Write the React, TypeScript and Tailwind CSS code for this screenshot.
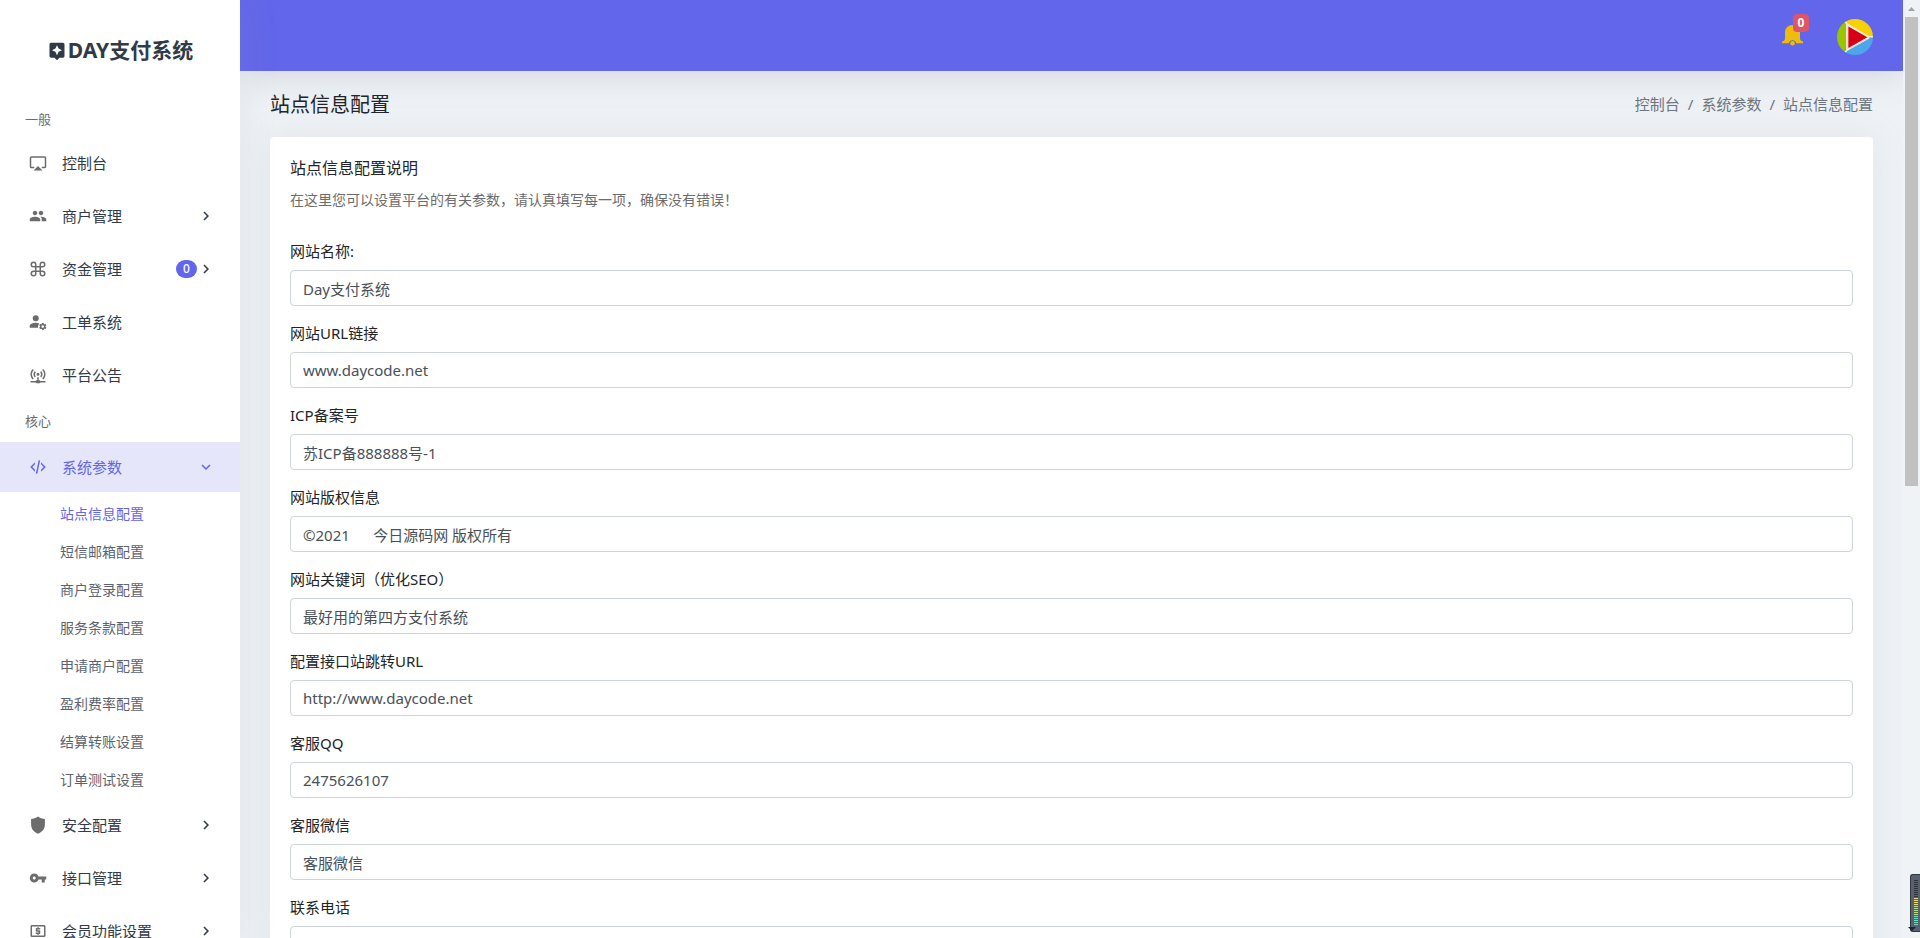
import type { ReactNode } from "react";
import {
  MdAssistant,
  MdChevronRight,
  MdExpandMore,
  MdLocalAtm,
  MdPeople,
  MdVpnKey,
} from "react-icons/md";

function Glyph({ d, children }: { d?: string; children?: ReactNode }) {
  return (
    <svg viewBox="0 0 24 24" className="size-[18px]" fill="currentColor" aria-hidden="true">
      {d ? <path d={d} /> : children}
    </svg>
  );
}

const AIRPLAY =
  "M6,22H18L12,16M21,3H3A2,2 0 0,0 1,5V17A2,2 0 0,0 3,19H7V17H3V5H21V17H17V19H21A2,2 0 0,0 23,17V5A2,2 0 0,0 21,3Z";
const COMMAND =
  "M6,2A4,4 0 0,1 10,6V8H14V6A4,4 0 0,1 18,2A4,4 0 0,1 22,6A4,4 0 0,1 18,10H16V14H18A4,4 0 0,1 22,18A4,4 0 0,1 18,22A4,4 0 0,1 14,18V16H10V18A4,4 0 0,1 6,22A4,4 0 0,1 2,18A4,4 0 0,1 6,14H8V10H6A4,4 0 0,1 2,6A4,4 0 0,1 6,2M16,18A2,2 0 0,0 18,20A2,2 0 0,0 20,18A2,2 0 0,0 18,16H16V18M14,10H10V14H14V10M6,16A2,2 0 0,0 4,18A2,2 0 0,0 6,20A2,2 0 0,0 8,18V16H6M8,6A2,2 0 0,0 6,4A2,2 0 0,0 4,6A2,2 0 0,0 6,8H8V6M18,8A2,2 0 0,0 20,6A2,2 0 0,0 18,4A2,2 0 0,0 16,6V8H18Z";
const NETWORK =
  "M4.93,3.93C3.12,5.74 2,8.24 2,11C2,13.76 3.12,16.26 4.93,18.07L6.34,16.66C4.89,15.22 4,13.22 4,11C4,8.79 4.89,6.78 6.34,5.34L4.93,3.93M19.07,3.93L17.66,5.34C19.11,6.78 20,8.79 20,11C20,13.22 19.11,15.22 17.66,16.66L19.07,18.07C20.88,16.26 22,13.76 22,11C22,8.24 20.88,5.74 19.07,3.93M7.76,6.76C6.67,7.85 6,9.35 6,11C6,12.65 6.67,14.15 7.76,15.24L9.17,13.83C8.45,13.11 8,12.11 8,11C8,9.89 8.45,8.89 9.17,8.17L7.76,6.76M16.24,6.76L14.83,8.17C15.55,8.89 16,9.89 16,11C16,12.11 15.55,13.11 14.83,13.83L16.24,15.24C17.33,14.15 18,12.65 18,11C18,9.35 17.33,7.85 16.24,6.76M12,9A2,2 0 0,0 10,11A2,2 0 0,0 12,13A2,2 0 0,0 14,11A2,2 0 0,0 12,9M11,15V19H10A1,1 0 0,0 9,20H2V22H9A1,1 0 0,0 10,23H14A1,1 0 0,0 15,22H22V20H15A1,1 0 0,0 14,19H13V15H11Z";
const CODE =
  "M12.89,3L14.85,3.4L11.11,21L9.15,20.6L12.89,3M19.59,12L16,8.41V5.58L22.42,12L16,18.41V15.58L19.59,12M1.58,12L8,5.58V8.41L4.41,12L8,15.58V18.41L1.58,12Z";
const SHIELD =
  "M12 .8C9.4 2.6 5.8 3.8 2.8 4v7c0 5.800 3.100 10.200 9.200 12.500 6.100-2.300 9.200-6.700 9.200-12.500V4C18.200 3.800 14.600 2.600 12 .8Z";
const GEAR =
  "M19.14 12.94c.04-.3.06-.61.06-.94 0-.32-.02-.64-.07-.94l2.03-1.58a.49.49 0 0 0 .12-.61l-1.92-3.32a.488.488 0 0 0-.59-.22l-2.39.96c-.5-.38-1.03-.7-1.62-.94l-.36-2.54a.484.484 0 0 0-.48-.41h-3.84c-.24 0-.43.17-.47.41l-.36 2.54c-.59.24-1.13.57-1.62.94l-2.39-.96c-.22-.08-.47 0-.59.22L2.74 8.87c-.12.21-.08.47.12.61l2.03 1.58c-.05.3-.09.63-.09.94s.02.64.07.94l-2.03 1.58a.49.49 0 0 0-.12.61l1.92 3.32c.12.22.37.29.59.22l2.39-.96c.5.38 1.03.7 1.62.94l.36 2.54c.05.24.24.41.48.41h3.84c.24 0 .44-.17.47-.41l.36-2.54c.59-.24 1.13-.56 1.62-.94l2.39.96c.22.08.47 0 .59-.22l1.92-3.32c.12-.22.07-.47-.12-.61l-2.01-1.58zM12 15.6c-1.98 0-3.6-1.62-3.6-3.6s1.62-3.6 3.6-3.6 3.6 1.62 3.6 3.6-1.62 3.6-3.6 3.6z";

const submenu = [
  "站点信息配置",
  "短信邮箱配置",
  "商户登录配置",
  "服务条款配置",
  "申请商户配置",
  "盈利费率配置",
  "结算转账设置",
  "订单测试设置",
];

const fields = [
  { id: "site-name", label: "网站名称:", value: "Day支付系统" },
  { id: "site-url", label: "网站URL链接", value: "www.daycode.net" },
  { id: "icp", label: "ICP备案号", value: "苏ICP备888888号-1" },
  { id: "copyright", label: "网站版权信息", value: "©2021\u00a0\u00a0\u00a0\u00a0\u00a0 今日源码网 版权所有" },
  { id: "keywords", label: "网站关键词（优化SEO）", value: "最好用的第四方支付系统" },
  { id: "redirect", label: "配置接口站跳转URL", value: "http://www.daycode.net" },
  { id: "qq", label: "客服QQ", value: "2475626107" },
  { id: "wechat", label: "客服微信", value: "客服微信" },
  { id: "phone", label: "联系电话", value: "" },
];

type ItemProps = {
  icon: ReactNode;
  label: string;
  arrow?: boolean;
  badge?: string;
  open?: boolean;
};

function NavItem({ icon, label, arrow, badge, open }: ItemProps) {
  return (
    <a
      href="#"
      aria-expanded={arrow ? Boolean(open) : undefined}
      className={
        open
          ? "flex h-[50px] shrink-0 items-center bg-[#e6e6fb] pr-[25px] pl-[29px] text-[15px] text-[#6266ea]"
          : "flex h-[50px] shrink-0 items-center pr-[25px] pl-[29px] text-[15px] text-[#313a46]"
      }
    >
      <span className={open ? "text-[#6266ea]" : "text-[#6c6c6c]"}>{icon}</span>
      <span className="ml-[15px] flex-1">{label}</span>
      {badge && (
        <span className="flex h-[18px] w-[21px] items-center justify-center rounded-full bg-[#6266ea] text-xs font-medium text-white">
          {badge}
        </span>
      )}
      {arrow && (open ? <MdExpandMore className="size-[18px]" /> : <MdChevronRight className="size-[18px]" />)}
    </a>
  );
}

function Sidebar() {
  return (
    <aside className="z-20 flex w-60 shrink-0 flex-col overflow-hidden bg-white shadow-[0_0_35px_0_rgba(154,161,171,0.15)]">
      <a href="#" className="flex h-[100px] shrink-0 items-center justify-center gap-px pt-[2px] text-[21px] font-bold text-[#313a46]">
        <MdAssistant className="size-5" />
        <span>DAY支付系统</span>
      </a>
      <nav className="flex flex-col">
        <h2 className="px-[25px] pt-[9px] pb-[9px] text-[13px] leading-5 text-[#6c6c6c]">一般</h2>
        <div className="flex flex-col gap-[3px]">
          <NavItem icon={<Glyph d={AIRPLAY} />} label="控制台" />
          <NavItem icon={<MdPeople className="size-[18px]" />} label="商户管理" arrow />
          <NavItem icon={<Glyph d={COMMAND} />} label="资金管理" arrow badge="0" />
          <NavItem
            icon={
              <Glyph>
                <circle cx="9" cy="7" r="4" />
                <path d="M9 13C6.300 13 1 14.300 1 17V19.500H12C12 17.300 12.500 15.500 13.600 14 12 13.300 10.200 13 9 13Z" />
                <path d={GEAR} transform="translate(12.400 12) scale(.5)" />
              </Glyph>
            }
            label="工单系统"
          />
          <NavItem icon={<Glyph d={NETWORK} />} label="平台公告" />
        </div>
        <h2 className="px-[25px] pt-[11px] pb-[11px] text-[13px] leading-5 text-[#6c6c6c]">核心</h2>
        <NavItem icon={<Glyph d={CODE} />} label="系统参数" arrow open />
        <ul className="flex flex-col pt-[3px] pb-px pl-[60px] text-sm">
          {submenu.map((name, i) => (
            <li key={name} className="flex h-[38px] items-center">
              <a href="#" className={i === 0 ? "text-[#6266ea]" : "text-[#5c6370]"}>
                {name}
              </a>
            </li>
          ))}
        </ul>
        <div className="flex flex-col gap-[3px]">
          <NavItem icon={<Glyph d={SHIELD} />} label="安全配置" arrow />
          <NavItem icon={<MdVpnKey className="size-[18px]" />} label="接口管理" arrow />
          <NavItem icon={<MdLocalAtm className="size-[18px]" />} label="会员功能设置" arrow />
        </div>
      </nav>
    </aside>
  );
}

function Header() {
  return (
    <header className="z-10 flex h-[71px] shrink-0 items-center justify-end gap-[33px] bg-[#6266ea] pr-[30px] shadow-[0_0_35px_0_rgba(120,128,140,0.3)]">
      <button type="button" aria-label="通知" className="relative h-6 w-[23px]">
        <svg viewBox="0 0 23 24" className="h-6 w-[23px]" fill="#edbd0a" aria-hidden="true">
          <path d="M11.500 1C15.800 1 19 4.200 19 8.500V14.500C19 16 20 17.200 22 17.400V19.300H15.200A3.800 3.800 0 0 0 7.800 19.300H1V17.400C3 17.200 4 16 4 14.500V8.500C4 4.200 7.200 1 11.500 1Z" />
          <circle cx="11.500" cy="19.300" r="2.300" />
        </svg>
        <span className="absolute -top-[10px] left-[12px] flex h-[18px] w-4 items-center justify-center rounded bg-[#dd5568] text-xs font-bold text-white">
          0
        </span>
      </button>
      <button type="button" aria-label="账户" className="mt-[3px]">
        <svg viewBox="0 0 36 36" className="size-9" aria-hidden="true">
          <defs>
            <clipPath id="avatar">
              <circle cx="18" cy="18" r="18" />
            </clipPath>
          </defs>
          <g clipPath="url(#avatar)">
            <path d="M9.500 0H0V36H9.500Z" fill="#98c404" />
            <path d="M8 0H36V18H9.500V3Z" fill="#f8d100" />
            <path d="M9.500 18H36V36H8V33Z" fill="#4da6ec" />
            <path d="M9.800 4V32M8 2.500 10 5 32 17.800H36M8 33.500 10 31 32 18.800" stroke="#f3ecd0" strokeWidth="1.500" fill="none" />
            <path d="M10.800 6.500 31.500 18.300 10.800 30Z" fill="#d80018" stroke="#f6efe0" strokeWidth="1.100" strokeLinejoin="round" />
          </g>
        </svg>
      </button>
    </header>
  );
}

function ScrollTrack() {
  return (
    <div aria-hidden="true" className="z-30 flex w-[17px] shrink-0 flex-col items-center bg-[#f0f3f6]">
      <svg viewBox="0 0 17 17" className="size-[17px] shrink-0" fill="#a3a3a3">
        <path d="M5 11 8.500 7 12 11Z" />
      </svg>
      <div className="h-1/2 w-[13px] bg-[#c1c1c1]" />
    </div>
  );
}

function LevelMeter() {
  return (
    <div
      aria-hidden="true"
      className="absolute right-0 bottom-[6px] z-40 flex h-[58px] w-[10px] items-center justify-end rounded-l-[3px] border border-r-0 border-[#33363f] bg-[#596070] pr-[2px]"
    >
      <svg viewBox="0 0 4 46" className="h-[46px] w-1">
        {Array.from({ length: 23 }, (_, i) => (
          <rect
            key={i}
            y={i * 2}
            width="4"
            height="1"
            fill={i < 9 ? "#2f333c" : i < 13 ? "#e8dc72" : i < 18 ? "#b4dd84" : "#72dcc0"}
          />
        ))}
      </svg>
      <svg viewBox="0 0 8 4" className="absolute bottom-0 -left-[3px] h-1 w-2" fill="#22252b">
        <path d="M0 0H8L4 4Z" />
      </svg>
    </div>
  );
}

export default function App() {
  return (
    <div className="relative flex h-screen overflow-hidden bg-[#eef2f6] font-['Noto_Sans','Noto_Sans_CJK_SC',sans-serif] text-[#212529]">
      <Sidebar />
      <div className="flex min-w-0 flex-1 flex-col">
        <Header />
        <main className="min-h-0 flex-1 overflow-hidden px-[30px]">
          <div className="flex h-[66px] items-center justify-between">
            <h1 className="pt-[2px] text-xl">站点信息配置</h1>
            <nav aria-label="面包屑" className="flex gap-2 text-[15px] text-[#6c757d]">
              <a href="#">控制台</a>
              <span>/</span>
              <a href="#">系统参数</a>
              <span>/</span>
              <span>站点信息配置</span>
            </nav>
          </div>
          <section className="rounded bg-white px-5 pt-[19px] pb-5 shadow-[0_0_35px_0_rgba(154,161,171,0.15)]">
            <h2 className="text-base leading-6">站点信息配置说明</h2>
            <p className="mt-[10px] text-sm leading-5 text-[#6c6c6c]">
              在这里您可以设置平台的有关参数，请认真填写每一项，确保没有错误！
            </p>
            <form className="mt-[30px] flex flex-col gap-4">
              {fields.map((f) => (
                <div key={f.id} className="flex flex-col gap-2">
                  <label htmlFor={f.id} className="text-[15px] leading-[22px]">
                    {f.label}
                  </label>
                  <input
                    id={f.id}
                    type="text"
                    defaultValue={f.value}
                    className="h-9 w-full rounded border border-[#ced4da] bg-white px-3 text-[15px] text-[#495057] outline-none"
                  />
                </div>
              ))}
            </form>
          </section>
        </main>
      </div>
      <ScrollTrack />
      <LevelMeter />
    </div>
  );
}
